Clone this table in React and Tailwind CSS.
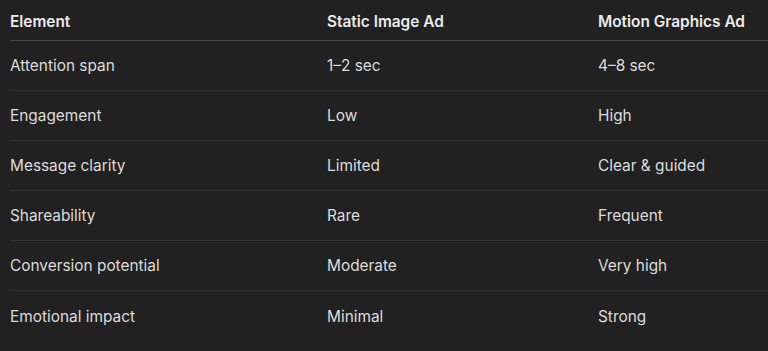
import React from 'react';

const rows = [
  ['Attention span', '1–2 sec', '4–8 sec'],
  ['Engagement', 'Low', 'High'],
  ['Message clarity', 'Limited', 'Clear & guided'],
  ['Shareability', 'Rare', 'Frequent'],
  ['Conversion potential', 'Moderate', 'Very high'],
  ['Emotional impact', 'Minimal', 'Strong'],
];

const App = () => {
  return (
    <div
      className="w-[768px] h-[351px] overflow-hidden bg-[#212121] pl-[10px]"
      style={{ fontFamily: 'Inter, "Noto Sans", sans-serif' }}
    >
      <div className="w-[800px]">
        {/* Header */}
        <div className="flex h-[41px] items-center pt-[3px] border-b border-[#474747] text-[15.4px] leading-5 font-semibold text-[#ececec]">
          <div className="w-[317px]">Element</div>
          <div className="w-[271px]">Static Image Ad</div>
          <div className="flex-1">Motion Graphics Ad</div>
        </div>

        {/* Rows */}
        {rows.map((row, i) => (
          <div
            key={i}
            className={`flex h-[50px] items-center pt-[1px] text-[15.4px] leading-5 text-[#dcdcdc]
              ${i < rows.length - 1 ? 'border-b border-[#313131]' : ''}`}
          >
            <div className="w-[317px]">{row[0]}</div>
            <div className="w-[271px]">{row[1]}</div>
            <div className="flex-1">{row[2]}</div>
          </div>
        ))}
      </div>
    </div>
  );
};

export default App;
